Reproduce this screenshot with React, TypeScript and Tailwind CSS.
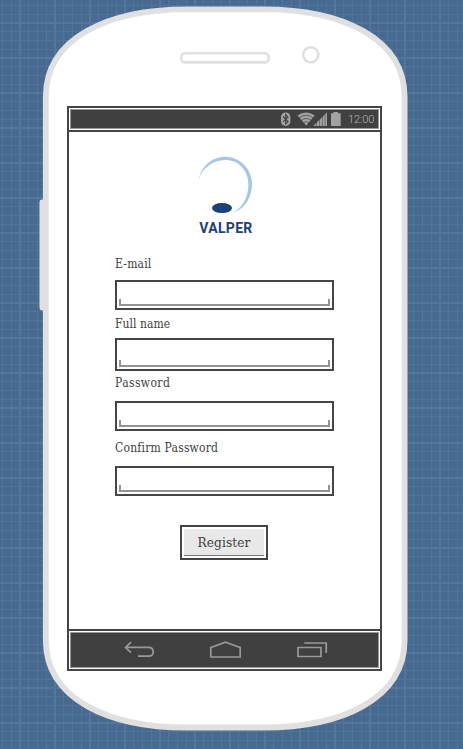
import React from 'react';

const fields = [
  { label: 'E-mail', type: 'email', labelGap: 'mt-[21px]', boxGap: 'mt-[9px]', height: 'h-[30px]', tracking: 'tracking-[0.2px]' },
  { label: 'Full name', type: 'text', labelGap: 'mt-[7px]', boxGap: 'mt-[7px]', height: 'h-[33px]', tracking: 'tracking-[0.05px]' },
  { label: 'Password', type: 'password', labelGap: 'mt-[5px]', boxGap: 'mt-[11px]', height: 'h-[30px]', tracking: 'tracking-[0.4px]' },
  { label: 'Confirm Password', type: 'password', labelGap: 'mt-[10px]', boxGap: 'mt-[11px]', height: 'h-[30px]', tracking: 'tracking-[0.2px]' },
];

function Blueprint() {
  return (
    <svg className="absolute inset-0" width="463" height="749" aria-hidden="true">
      <defs>
        <pattern id="grid" x="20" y="23" width="35" height="35" patternUnits="userSpaceOnUse">
          <rect width="35" height="35" fill="#486a90" />
          <path d="M8.500 0V35M17.500 0V35M26.500 0V35M0 8.500H35M0 17.500H35M0 26.500H35" stroke="#527499" strokeWidth="1" />
          <path d="M0 0V35M35 0V35M0 0H35M0 35H35" stroke="#55769c" strokeWidth="2" />
        </pattern>
      </defs>
      <rect width="463" height="749" fill="url(#grid)" />
    </svg>
  );
}

function PhoneCase() {
  return (
    <svg className="absolute inset-0" width="463" height="749" aria-hidden="true">
      <path d="M46 199.500H42Q39.500 199.500 39.500 202V307Q39.500 310.500 42 310.500H46Z" fill="#e0e0e0" />
      <path
        d="M45.800 97C45.800 38 108 9.300 187 9.300H263C342 9.300 404.600 38 404.600 97V640C404.600 699 342 727.500 263 727.500H187C108 727.500 45.800 699 45.800 640Z"
        fill="#fff"
        stroke="#e0e0e0"
        strokeWidth="5.800"
      />
      <rect x="181.200" y="53.200" width="87.600" height="9.200" rx="4" fill="none" stroke="#e0e0e0" strokeWidth="2.600" />
      <circle cx="310.800" cy="54.800" r="7.600" fill="none" stroke="#e0e0e0" strokeWidth="2.600" />
    </svg>
  );
}

function StatusIcons() {
  return (
    <svg width="62" height="16" viewBox="280 111 62 16" className="mr-[6px]" aria-hidden="true">
      <rect x="281" y="112.500" width="9.400" height="13.400" rx="4.500" fill="#a2a2a2" />
      <path d="M283 116.500L288 121.600L285.700 124V114.500L288 116.900L283 121.800" fill="none" stroke="#404040" strokeWidth="1.100" />
      <path d="M297.500 115.500Q306 109.300 314.700 115.500L306.200 125.500Z" fill="#a2a2a2" />
      <path d="M299 118Q306.200 112.700 313.400 118M301.200 120.400Q306.200 116.700 311.200 120.400M303.400 122.700Q306.200 120.700 309 122.700" fill="none" stroke="#404040" strokeWidth=".7" />
      <path d="M313.300 126L327 112.300V126Z" fill="#a2a2a2" />
      <path d="M316.500 118V126M319.500 116V126M322.300 114V126M325 112V126" stroke="#404040" strokeWidth=".55" />
      <path d="M331 113.300H333.500V112H338V113.300H340.700V126H331Z" fill="#a2a2a2" />
    </svg>
  );
}

function Logo() {
  return (
    <div className="flex flex-col items-center">
      <svg width="60" height="62" viewBox="195 154 60 62" aria-hidden="true">
        <path d="M198.700 179.500C201.500 166 212 156.700 225 156.700C240 156.700 252 169 252 184C252 198.500 243 210.500 232.500 212.500C242 208.500 248.400 197.500 248.400 184.500C248.400 170.500 238.500 160 225.500 160C212.500 160 202 168.500 198.700 179.500Z" fill="#a7c6e7" />
        <ellipse cx="222" cy="208.100" rx="10" ry="5" fill="#1c4177" />
      </svg>
      <div className="mt-[4px] ml-[3px] h-4 font-['Roboto',sans-serif] text-[14px] leading-4 font-bold tracking-[0.300px] whitespace-nowrap text-[#1c4177]">VALPER</div>
    </div>
  );
}

function NavBar() {
  return (
    <div className="h-[42px] border-2 border-[#454545] p-px">
      <div className="flex h-full items-center justify-center border border-[#999] bg-[#404040] pl-[2px]">
        <svg width="206" height="20" viewBox="123 641 206 20" fill="none" stroke="#999" strokeWidth="1.700" aria-hidden="true">
          <path d="M131 643.200L125.500 648.500L131 653.700M126 648.400H148.500C152 648.400 153.200 650 153.200 652.800C153.200 655.700 152 657.200 148.500 657.200H138" />
          <path d="M210.800 648.500L225.500 643.200L240.200 648.500V658H210.800Z" />
          <path d="M298 648.500H321V657.500H298ZM304.300 644H326.200V654" />
        </svg>
      </div>
    </div>
  );
}

export default function App() {
  return (
    <main className="relative h-[749px] w-[463px] overflow-hidden bg-[#486a90]">
      <Blueprint />
      <PhoneCase />
      <section className="relative ml-[67px] flex h-full w-[315px] flex-col pt-[106px] pb-[78px]">
        <header className="h-[26px] shrink-0 border-2 border-[#454545] p-px">
          <div className="flex h-full items-center justify-end border border-[#999] bg-[#404040] pr-[3px]">
            <StatusIcons />
            <span className="w-[27px] pt-px font-['Roboto',sans-serif] text-[11px] leading-4 font-light tracking-[-0.100px] whitespace-nowrap text-[#b5b5b5]">12:00</span>
          </div>
        </header>
        <form className="flex flex-1 flex-col border-x-2 border-[#454545] px-[46px] pt-[22px] font-['DejaVu_Serif_Condensed','DejaVu_Serif',serif] text-[#404040]" onSubmit={(e) => e.preventDefault()}>
          <Logo />
          {fields.map((f) => (
            <label key={f.label} className={`block ${f.labelGap}`}>
              <span className={`block h-[14px] text-[12px] leading-[14px] whitespace-nowrap ${f.tracking}`}>{f.label}</span>
              <span className={`flex w-[219px] flex-col justify-end border-2 border-[#454545] px-[2px] pb-[2px] ${f.boxGap} ${f.height}`}>
                <input type={f.type} className="h-[7px] w-full border-x-2 border-b-2 border-[#929292] outline-none" />
              </span>
            </label>
          ))}
          <button type="submit" className="mt-[29px] ml-[65px] h-[35px] w-[88px] border-2 border-[#454545] p-[2px]">
            <span className="block h-full border-b border-[#777] bg-[#e8e8e8] text-[13.500px] leading-[27px] tracking-[0.100px]">Register</span>
          </button>
        </form>
        <NavBar />
      </section>
    </main>
  );
}
